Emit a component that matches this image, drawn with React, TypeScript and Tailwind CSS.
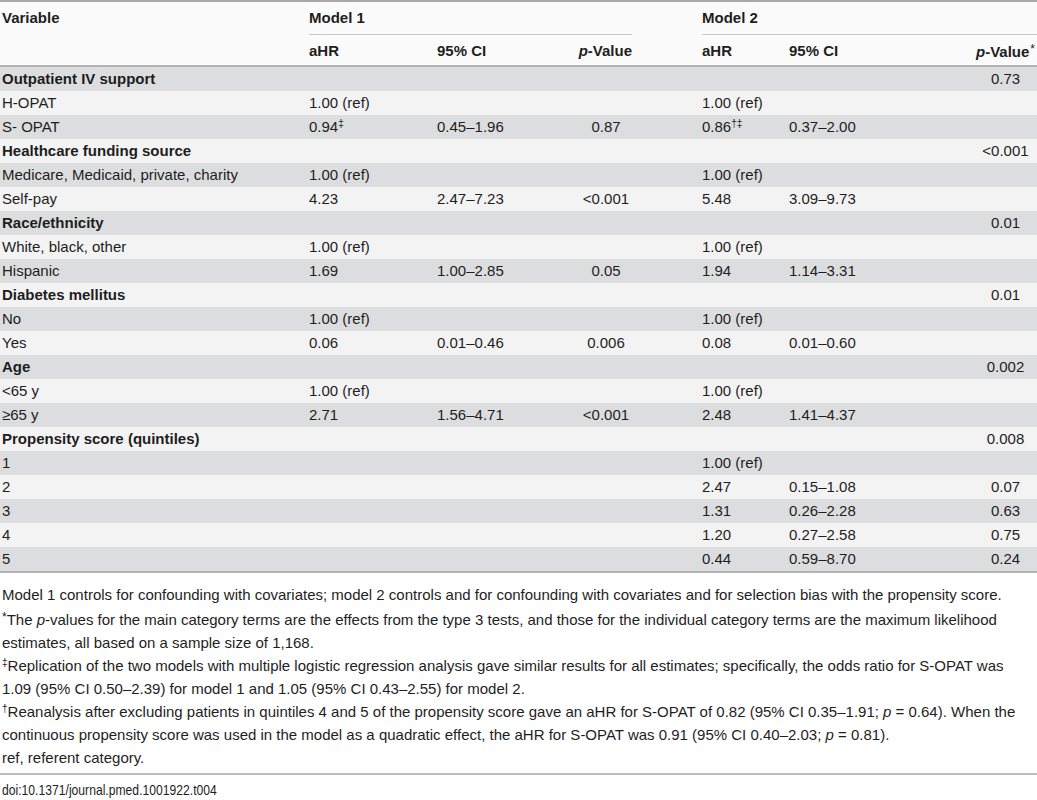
import React from "react";

type Row = {
  label: string;
  bold?: boolean;
  a1?: React.ReactNode;
  c1?: string;
  p1?: string;
  a2?: React.ReactNode;
  c2?: string;
  p2?: string;
};

const Sup = ({ children }: { children: React.ReactNode }) => (
  <span className="text-[10px] align-[5px] leading-none">{children}</span>
);

const rows: Row[] = [
  { label: "Outpatient IV support", bold: true, p2: "0.73" },
  { label: "H-OPAT", a1: "1.00 (ref)", a2: "1.00 (ref)" },
  { label: "S- OPAT", a1: <>0.94<Sup>‡</Sup></>, c1: "0.45–1.96", p1: "0.87", a2: <>0.86<Sup>†‡</Sup></>, c2: "0.37–2.00" },
  { label: "Healthcare funding source", bold: true, p2: "<0.001" },
  { label: "Medicare, Medicaid, private, charity", a1: "1.00 (ref)", a2: "1.00 (ref)" },
  { label: "Self-pay", a1: "4.23", c1: "2.47–7.23", p1: "<0.001", a2: "5.48", c2: "3.09–9.73" },
  { label: "Race/ethnicity", bold: true, p2: "0.01" },
  { label: "White, black, other", a1: "1.00 (ref)", a2: "1.00 (ref)" },
  { label: "Hispanic", a1: "1.69", c1: "1.00–2.85", p1: "0.05", a2: "1.94", c2: "1.14–3.31" },
  { label: "Diabetes mellitus", bold: true, p2: "0.01" },
  { label: "No", a1: "1.00 (ref)", a2: "1.00 (ref)" },
  { label: "Yes", a1: "0.06", c1: "0.01–0.46", p1: "0.006", a2: "0.08", c2: "0.01–0.60" },
  { label: "Age", bold: true, p2: "0.002" },
  { label: "<65 y", a1: "1.00 (ref)", a2: "1.00 (ref)" },
  { label: "≥65 y", a1: "2.71", c1: "1.56–4.71", p1: "<0.001", a2: "2.48", c2: "1.41–4.37" },
  { label: "Propensity score (quintiles)", bold: true, p2: "0.008" },
  { label: "1", a2: "1.00 (ref)" },
  { label: "2", a2: "2.47", c2: "0.15–1.08", p2: "0.07" },
  { label: "3", a2: "1.31", c2: "0.26–2.28", p2: "0.63" },
  { label: "4", a2: "1.20", c2: "0.27–2.58", p2: "0.75" },
  { label: "5", a2: "0.44", c2: "0.59–8.70", p2: "0.24" },
];

const grid = "grid grid-cols-[309px_128px_123px_92px_50px_87px_151px_97px]";

export default function App() {
  return (
    <div
      className="w-[1037px] bg-white text-[#1e1e1e] text-[15px]"
      style={{ fontFamily: "'Liberation Sans', Arial, Helvetica, sans-serif" }}
    >
      <div className="border-t-2 border-[#a9a9a9]">
        {/* header row 1 */}
        <div className={`${grid} h-[32px] items-center font-bold bg-[#fbfbfb]`}>
          <div className="pl-[2px]">Variable</div>
          <div className="col-span-3">Model 1</div>
          <div />
          <div className="col-span-3">Model 2</div>
        </div>
        {/* header underline row */}
        <div className={`${grid} h-[1px]`}>
          <div className="bg-[#fbfbfb]" />
          <div className="col-span-3 pr-[20px] bg-[#fbfbfb]">
            <div className="h-[1px] bg-[#c8c8c8]" />
          </div>
          <div className="bg-[#fbfbfb]" />
          <div className="col-span-3 bg-[#c8c8c8]" />
        </div>
        {/* header row 2 */}
        <div className={`${grid} h-[30px] items-center font-bold bg-[#fbfbfb] pt-[3px]`}>
          <div />
          <div>aHR</div>
          <div>95% CI</div>
          <div className="text-right pr-[20px] whitespace-nowrap">
            <span className="italic">p</span>-Value
          </div>
          <div />
          <div>aHR</div>
          <div>95% CI</div>
          <div className="text-right pr-[2px] whitespace-nowrap">
            <span className="italic">p</span>-Value<span className="font-normal text-[12px] align-[4px] ml-[1px]">*</span>
          </div>
        </div>
        <div className="h-[2px] bg-[#b4b4b4]" />
        {rows.map((r, i) => (
          <div
            key={i}
            className={`${grid} h-[24px] items-center ${i % 2 === 0 ? "bg-[#dcdddf]" : "bg-[#f3f3f3]"}`}
          >
            <div className={`pl-[2px] whitespace-nowrap ${r.bold ? "font-bold" : ""}`}>{r.label}</div>
            <div className="whitespace-nowrap">{r.a1}</div>
            <div className="whitespace-nowrap">{r.c1}</div>
            <div className="text-center whitespace-nowrap">{r.p1}</div>
            <div />
            <div className="whitespace-nowrap">{r.a2}</div>
            <div className="whitespace-nowrap">{r.c2}</div>
            <div className="pl-[34px] text-center whitespace-nowrap">{r.p2}</div>
          </div>
        ))}
        <div className="h-[2px] bg-[#b4b4b4]" />
      </div>

      <div className="pt-[10px] pl-[2px] pb-[4px] leading-[23px] whitespace-nowrap">
        <p>
          Model 1 controls for confounding with covariates; model 2 controls and for confounding with covariates and for selection bias with the propensity score.
        </p>
        <p>
          <span className="text-[12px] align-[4px]">*</span>The <span className="italic">p</span>-values for the main category terms are the effects from the type 3 tests, and those for the individual category terms are the maximum likelihood
          <br />
          estimates, all based on a sample size of 1,168.
        </p>
        <p>
          <Sup>‡</Sup>Replication of the two models with multiple logistic regression analysis gave similar results for all estimates; specifically, the odds ratio for S-OPAT was
          <br />
          1.09 (95% CI 0.50–2.39) for model 1 and 1.05 (95% CI 0.43–2.55) for model 2.
        </p>
        <p>
          <Sup>†</Sup>Reanalysis after excluding patients in quintiles 4 and 5 of the propensity score gave an aHR for S-OPAT of 0.82 (95% CI 0.35–1.91; <span className="italic">p</span> = 0.64). When the
          <br />
          continuous propensity score was used in the model as a quadratic effect, the aHR for S-OPAT was 0.91 (95% CI 0.40–2.03; <span className="italic">p</span> = 0.81).
        </p>
        <p>ref, referent category.</p>
      </div>
      <div className="h-[2px] bg-[#bdbdbd]" />
      <div className="pl-[2px] h-[30px] flex items-center text-[15px]">
        <span className="inline-block origin-left scale-x-[0.81] whitespace-nowrap">doi:10.1371/journal.pmed.1001922.t004</span>
      </div>
    </div>
  );
}
